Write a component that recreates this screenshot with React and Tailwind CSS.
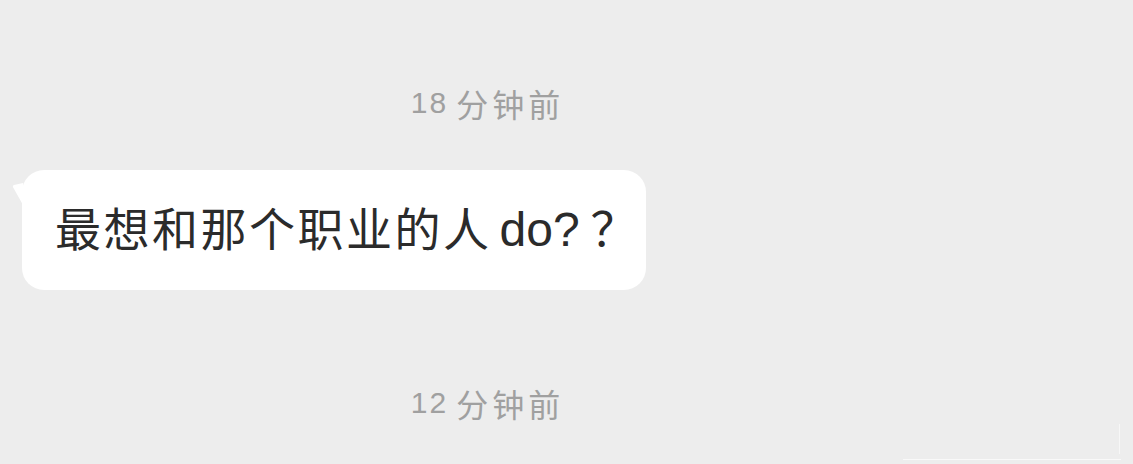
import React from "react";

function Stamp({ num }) {
  return (
    <div className="self-center h-[34px] flex items-center leading-none text-[#a0a0a0]">
      <span className="text-[30px] tracking-[2px]">{num}</span>
      <span
        className="text-[32px] tracking-[4px] ml-[8px]"
        style={{ fontFamily: '"Noto Sans CJK SC", sans-serif' }}
      >
        分钟前
      </span>
    </div>
  );
}

export default function App() {
  return (
    <div
      className="relative w-[1133px] h-[464px] bg-[#ededed] overflow-hidden"
      style={{ fontFamily: '"Liberation Sans", "Noto Sans CJK SC", sans-serif' }}
    >
      <div className="flex flex-col w-[975px]">
        <div className="h-[86px]" />
        <Stamp num="18" />
        <div className="h-[50px]" />
        <div className="flex items-start pl-[12px]">
          <svg width="11" height="24" viewBox="0 0 11 24" className="mt-[13px] -mr-[1px]">
            <path d="M11 0 L2 2 Q0 3 1.5 5 L11 22 Z" fill="#ffffff" />
          </svg>
          <div className="w-[624px] h-[120px] bg-white rounded-[22px] flex items-center pl-[33px] pb-[4px] text-[#2b2b2b]">
            <p className="leading-none whitespace-nowrap">
              <span
                className="text-[46px] tracking-[2.5px]"
                style={{ fontFamily: '"Noto Sans CJK SC", sans-serif' }}
              >
                最想和那个职业的人
              </span>
              <span className="text-[48px] ml-[8px]">do?</span>
              <span
                className="text-[47px] ml-[11px]"
                style={{ fontFamily: '"Noto Sans CJK SC", sans-serif' }}
              >
                ？
              </span>
            </p>
          </div>
        </div>
        <div className="h-[96px]" />
        <Stamp num="12" />
      </div>
      <div className="absolute left-[903px] top-[459px] w-[218px] h-[1px] bg-[#f9f9f9]" />
      <div className="absolute left-[1119px] top-[424px] w-[1px] h-[30px] bg-[#f7f7f7]" />
    </div>
  );
}
